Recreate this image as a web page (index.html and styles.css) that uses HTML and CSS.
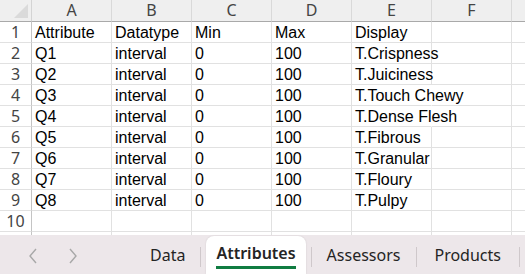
FILE: index.html
```html
<!DOCTYPE html>
<html lang="en">
<head>
    <meta charset="UTF-8">
    <title>Attributes</title>
    <link rel="stylesheet" href="styles.css">
</head>
<body>
    <div class="sheet">
        <div class="grid">
            <div class="corner"><span class="tri"></span></div>
            <div class="colhead">A</div>
            <div class="colhead">B</div>
            <div class="colhead">C</div>
            <div class="colhead">D</div>
            <div class="colhead">E</div>
            <div class="colhead">F</div>
            <div class="colhead"></div>

            <div class="rowhead">1</div>
            <div class="cell">Attribute</div><div class="cell">Datatype</div><div class="cell">Min</div><div class="cell">Max</div><div class="cell">Display</div><div class="cell"></div><div class="cell"></div>

            <div class="rowhead">2</div>
            <div class="cell">Q1</div><div class="cell">interval</div><div class="cell">0</div><div class="cell">100</div><div class="cell">T.Crispness</div><div class="cell"></div><div class="cell"></div>

            <div class="rowhead">3</div>
            <div class="cell">Q2</div><div class="cell">interval</div><div class="cell">0</div><div class="cell">100</div><div class="cell">T.Juiciness</div><div class="cell"></div><div class="cell"></div>

            <div class="rowhead">4</div>
            <div class="cell">Q3</div><div class="cell">interval</div><div class="cell">0</div><div class="cell">100</div><div class="cell spill">T.Touch Chewy</div><div class="cell"></div><div class="cell"></div>

            <div class="rowhead">5</div>
            <div class="cell">Q4</div><div class="cell">interval</div><div class="cell">0</div><div class="cell">100</div><div class="cell spill">T.Dense Flesh</div><div class="cell"></div><div class="cell"></div>

            <div class="rowhead">6</div>
            <div class="cell">Q5</div><div class="cell">interval</div><div class="cell">0</div><div class="cell">100</div><div class="cell">T.Fibrous</div><div class="cell"></div><div class="cell"></div>

            <div class="rowhead">7</div>
            <div class="cell">Q6</div><div class="cell">interval</div><div class="cell">0</div><div class="cell">100</div><div class="cell">T.Granular</div><div class="cell"></div><div class="cell"></div>

            <div class="rowhead">8</div>
            <div class="cell">Q7</div><div class="cell">interval</div><div class="cell">0</div><div class="cell">100</div><div class="cell">T.Floury</div><div class="cell"></div><div class="cell"></div>

            <div class="rowhead">9</div>
            <div class="cell">Q8</div><div class="cell">interval</div><div class="cell">0</div><div class="cell">100</div><div class="cell">T.Pulpy</div><div class="cell"></div><div class="cell"></div>

            <div class="rowhead">10</div>
            <div class="cell"></div><div class="cell"></div><div class="cell"></div><div class="cell"></div><div class="cell"></div><div class="cell"></div><div class="cell"></div>

            <div class="rowhead"></div>
            <div class="cell"></div><div class="cell"></div><div class="cell"></div><div class="cell"></div><div class="cell"></div><div class="cell"></div><div class="cell"></div>
        </div>
    </div>

    <div class="tabbar">
        <div class="nav">
            <svg class="arrow" width="10" height="16" viewBox="0 0 10 16"><polyline points="8,1 2,8 8,15" fill="none" stroke="#a8a8a8" stroke-width="1.4"/></svg>
            <svg class="arrow" width="10" height="16" viewBox="0 0 10 16"><polyline points="2,1 8,8 2,15" fill="none" stroke="#a8a8a8" stroke-width="1.4"/></svg>
        </div>
        <div class="tab">Data</div>
        <div class="sep"></div>
        <div class="tab active"><span>Attributes</span></div>
        <div class="sep"></div>
        <div class="tab assessors">Assessors</div>
        <div class="sep"></div>
        <div class="tab products">Products</div>
        <div class="sep"></div>
    </div>
</body>
</html>
```

FILE: styles.css
```css
body {
    margin: 0;
    width: 525px;
    height: 274px;
    overflow: hidden;
    background-color: white;
}
.sheet {
    height: 235px;
    overflow: hidden;
}
.grid {
    display: grid;
    grid-template-columns: 32px repeat(6, 80px) 40px;
    grid-auto-rows: 21px;
    grid-template-rows: 22px;
}
.corner {
    background-color: #efefef;
    border-right: 1px solid #d4d4d4;
    border-bottom: 1px solid #a9a9a9;
    box-sizing: border-box;
    display: flex;
    align-items: flex-end;
    justify-content: flex-end;
    padding: 0 3px 3px 0;
}
.tri {
    width: 0;
    height: 0;
    border-left: 14px solid transparent;
    border-bottom: 14px solid #dadada;
}
.colhead {
    background-color: #efefef;
    border-right: 1px solid #d9d9d9;
    border-bottom: 1px solid #a9a9a9;
    box-sizing: border-box;
    font-family: "Noto Sans", sans-serif;
    font-size: 16px;
    line-height: 20px;
    color: #444;
    text-align: center;
}
.rowhead {
    border-right: 1px solid #c4c4c4;
    border-bottom: 1px solid #e1e1e1;
    box-sizing: border-box;
    font-family: "Noto Sans", sans-serif;
    font-size: 16px;
    line-height: 20px;
    color: #444;
    text-align: center;
}
.cell {
    border-right: 1px solid #e1e1e1;
    border-bottom: 1px solid #e1e1e1;
    box-sizing: border-box;
    font-family: "Liberation Sans", Arial, sans-serif;
    font-size: 16px;
    line-height: 21px;
    padding-left: 3px;
    white-space: nowrap;
    color: #000;
}
.cell.spill {
    border-right-color: transparent;
}
.tabbar {
    height: 39px;
    background-color: #ede7ea;
    display: flex;
    align-items: center;
    font-family: "Noto Sans", sans-serif;
    font-size: 16px;
    color: #242424;
}
.nav {
    width: 135px;
    display: flex;
    gap: 30px;
    padding-left: 28px;
    box-sizing: border-box;
    margin-top: 2px;
}
.tab {
    padding: 0 15px;
    line-height: 39px;
    margin-top: 2px;
}
.tab.assessors {
    padding: 0 16px 0 15px;
}
.tab.products {
    padding: 0 18px 0 17px;
}
.sep {
    width: 1px;
    height: 20px;
    background-color: #cfc8cb;
    margin-top: 4px;
}
.tab.active {
    align-self: flex-end;
    height: 38px;
    background-color: white;
    border-radius: 8px 8px 0 0;
    box-shadow: 0 0 2px rgba(0,0,0,0.12);
    padding: 0 10px;
    margin: 0 5px;
    font-weight: 600;
    display: flex;
    align-items: flex-start;
}
.tab.active span {
    display: block;
    line-height: 26px;
    margin-top: 4px;
    border-bottom: 3px solid #107c41;
}
```
